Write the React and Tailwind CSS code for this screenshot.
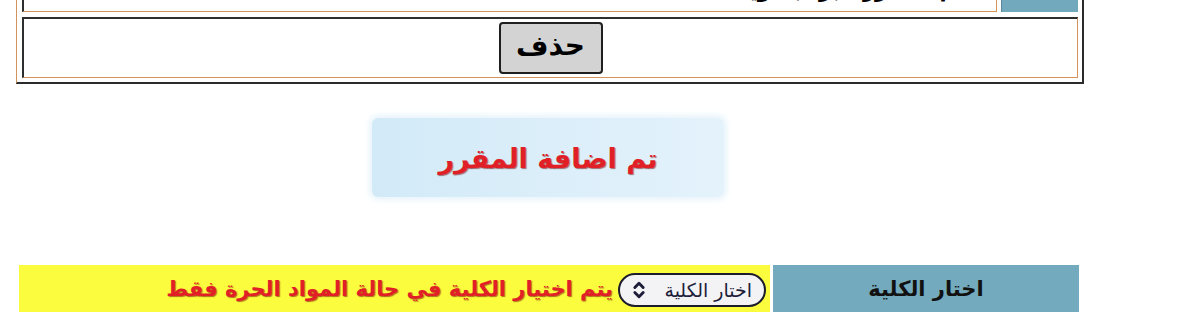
import { ChevronsUpDown } from 'lucide-react';

const ar = { fontFamily: '"DejaVu Sans", "Noto Sans", sans-serif' };

// inset cell border: dark top/left, orange bottom/right
const cellBorder = 'border-t-2 border-l-2 border-b border-r border-t-[#2e2e2e] border-l-[#2e2e2e] border-b-[#d2935c] border-r-[#d2935c]';

export default function App() {
    return (
        <div className="w-[1200px] h-[312px] overflow-hidden bg-white" style={ar}>
            {/* table with the delete button */}
            <div className="ml-[16px] mt-[-36px] w-[1068px] flex flex-col gap-[5px] pt-[5px] pl-[5px] pr-[4px] pb-[4px] border-t border-l border-b-2 border-r-2 border-t-[#d2935c] border-l-[#d2935c] border-b-[#2b2b2b] border-r-[#2b2b2b]">
                <div className="flex gap-[4px] h-[42px]">
                    <div className={`flex-1 bg-white overflow-hidden flex items-end justify-start pr-[12px] ${cellBorder}`} dir="rtl">
                        <span className="text-[21px] leading-[20px] mb-[11px] font-bold text-black">اسم المقرر : برمجة ويب</span>
                    </div>
                    <div className="w-[77px] bg-[#72a9bc] border-l border-l-[#5b8797]" />
                </div>
                <div className={`h-[61px] flex items-center justify-center bg-white ${cellBorder}`}>
                    <button className="w-[104px] h-[52px] bg-[#d3d3d3] border-2 border-[#1f1f1f] rounded-[4px] text-[28px] font-bold text-black leading-none pb-[4px]">
                        حذف
                    </button>
                </div>
            </div>

            {/* success message */}
            <div className="w-[1096px] flex justify-center mt-[34px]">
                <div className="w-[352px] h-[79px] rounded-[6px] bg-gradient-to-r from-[#d2eaf8] to-[#e4f2fb] shadow-[0_0_6px_3px_#e8f4fb] flex items-center justify-center">
                    <span className="text-[27px] font-bold text-[#e11f26] [text-shadow:1px_1px_1px_rgba(110,0,0,0.55)] pt-[4px]">
                        تم اضافة المقرر
                    </span>
                </div>
            </div>

            {/* college selection row */}
            <div className="ml-[19px] w-[1060px] mt-[68px] flex gap-[3px] h-[50px]">
                <div className="flex-1 bg-[#fcfc3e] flex items-center pr-[4px] gap-[5px]" dir="rtl">
                    <div className="w-[148px] h-[34px] rounded-full border-2 border-[#1c1c2c] bg-[#f3f3f6] flex items-center justify-between pr-[12px] pl-[9px]">
                        <span className="text-[19px] text-[#1d1d3a]">اختار الكلية</span>
                        <ChevronsUpDown size={20} strokeWidth={3.5} className="text-[#1d1d3a]" />
                    </div>
                    <span className="text-[21px] font-bold text-[#e11f26] [text-shadow:1px_1px_1px_rgba(110,0,0,0.55)]">
                        يتم اختيار الكلية في حالة المواد الحرة فقط
                    </span>
                </div>
                <div className="w-[306px] bg-[#73aabd] flex items-center justify-center" dir="rtl">
                    <span className="text-[21px] font-bold text-[#111]">اختار الكلية</span>
                </div>
            </div>
        </div>
    );
}
